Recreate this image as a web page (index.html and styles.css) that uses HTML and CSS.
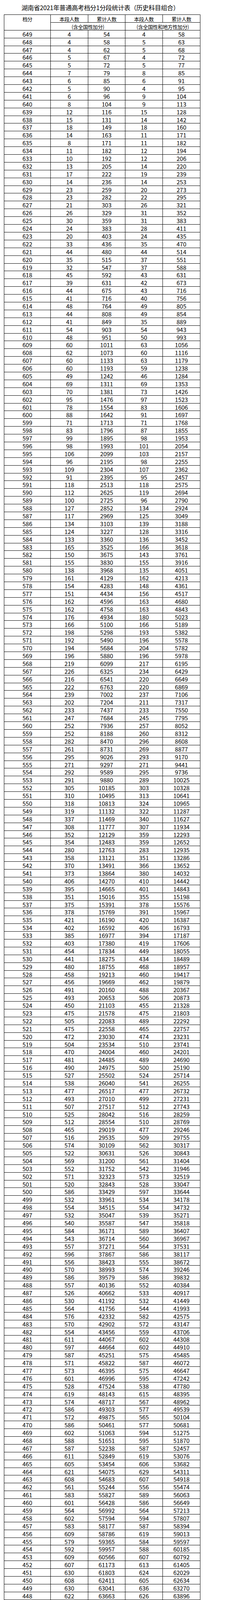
FILE: index.html
```html
<!DOCTYPE html>
<html lang="zh-CN">
<head>
<meta charset="utf-8">
<title>湖南省2021年普通高考档分1分段统计表（历史科目组合）</title>
<link rel="stylesheet" href="styles.css">
</head>
<body>
<div class="page">
<h1 class="title">湖南省2021年普通高考档分1分段统计表（历史科目组合）</h1>
<table class="score-table">
<thead>
<tr><th rowspan="2" class="th-score">档分</th><th>本段人数</th><th>累计人数</th><th>本段人数</th><th>累计人数</th></tr>
<tr><th colspan="2" class="th-span">(含全国性加分)</th><th colspan="2" class="th-span">(含全国性和地方性加分)</th></tr>
</thead>
<tbody>
<tr><td>649</td><td>4</td><td>54</td><td>4</td><td>58</td></tr>
<tr><td>648</td><td>4</td><td>58</td><td>5</td><td>63</td></tr>
<tr><td>647</td><td>4</td><td>62</td><td>5</td><td>68</td></tr>
<tr><td>646</td><td>5</td><td>67</td><td>4</td><td>72</td></tr>
<tr><td>645</td><td>5</td><td>72</td><td>5</td><td>77</td></tr>
<tr><td>644</td><td>7</td><td>79</td><td>8</td><td>85</td></tr>
<tr><td>643</td><td>6</td><td>85</td><td>6</td><td>91</td></tr>
<tr><td>642</td><td>5</td><td>90</td><td>4</td><td>95</td></tr>
<tr><td>641</td><td>6</td><td>96</td><td>9</td><td>104</td></tr>
<tr><td>640</td><td>8</td><td>104</td><td>9</td><td>113</td></tr>
<tr><td>639</td><td>12</td><td>116</td><td>15</td><td>128</td></tr>
<tr><td>638</td><td>15</td><td>131</td><td>14</td><td>142</td></tr>
<tr><td>637</td><td>18</td><td>149</td><td>18</td><td>160</td></tr>
<tr><td>636</td><td>14</td><td>163</td><td>11</td><td>171</td></tr>
<tr><td>635</td><td>8</td><td>171</td><td>11</td><td>182</td></tr>
<tr><td>634</td><td>11</td><td>182</td><td>12</td><td>194</td></tr>
<tr><td>633</td><td>10</td><td>192</td><td>12</td><td>206</td></tr>
<tr><td>632</td><td>13</td><td>205</td><td>14</td><td>220</td></tr>
<tr><td>631</td><td>17</td><td>222</td><td>19</td><td>239</td></tr>
<tr><td>630</td><td>14</td><td>236</td><td>14</td><td>253</td></tr>
<tr><td>629</td><td>23</td><td>259</td><td>20</td><td>273</td></tr>
<tr><td>628</td><td>23</td><td>282</td><td>22</td><td>295</td></tr>
<tr><td>627</td><td>21</td><td>303</td><td>26</td><td>321</td></tr>
<tr><td>626</td><td>26</td><td>329</td><td>31</td><td>352</td></tr>
<tr><td>625</td><td>30</td><td>359</td><td>31</td><td>383</td></tr>
<tr><td>624</td><td>24</td><td>383</td><td>28</td><td>411</td></tr>
<tr><td>623</td><td>20</td><td>403</td><td>24</td><td>435</td></tr>
<tr><td>622</td><td>33</td><td>436</td><td>35</td><td>470</td></tr>
<tr><td>621</td><td>44</td><td>480</td><td>44</td><td>514</td></tr>
<tr><td>620</td><td>35</td><td>515</td><td>37</td><td>551</td></tr>
<tr><td>619</td><td>32</td><td>547</td><td>37</td><td>588</td></tr>
<tr><td>618</td><td>45</td><td>592</td><td>43</td><td>631</td></tr>
<tr><td>617</td><td>39</td><td>631</td><td>42</td><td>673</td></tr>
<tr><td>616</td><td>44</td><td>675</td><td>43</td><td>716</td></tr>
<tr><td>615</td><td>41</td><td>716</td><td>40</td><td>756</td></tr>
<tr><td>614</td><td>48</td><td>764</td><td>49</td><td>805</td></tr>
<tr><td>613</td><td>44</td><td>808</td><td>49</td><td>854</td></tr>
<tr><td>612</td><td>41</td><td>849</td><td>35</td><td>889</td></tr>
<tr><td>611</td><td>54</td><td>903</td><td>54</td><td>943</td></tr>
<tr><td>610</td><td>48</td><td>951</td><td>50</td><td>993</td></tr>
<tr><td>609</td><td>60</td><td>1011</td><td>63</td><td>1056</td></tr>
<tr><td>608</td><td>62</td><td>1073</td><td>60</td><td>1116</td></tr>
<tr><td>607</td><td>60</td><td>1133</td><td>63</td><td>1179</td></tr>
<tr><td>606</td><td>60</td><td>1193</td><td>59</td><td>1238</td></tr>
<tr><td>605</td><td>49</td><td>1242</td><td>46</td><td>1284</td></tr>
<tr><td>604</td><td>69</td><td>1311</td><td>69</td><td>1353</td></tr>
<tr><td>603</td><td>70</td><td>1381</td><td>73</td><td>1426</td></tr>
<tr><td>602</td><td>95</td><td>1476</td><td>97</td><td>1523</td></tr>
<tr><td>601</td><td>78</td><td>1554</td><td>83</td><td>1606</td></tr>
<tr><td>600</td><td>88</td><td>1642</td><td>91</td><td>1697</td></tr>
<tr><td>599</td><td>71</td><td>1713</td><td>71</td><td>1768</td></tr>
<tr><td>598</td><td>83</td><td>1796</td><td>87</td><td>1855</td></tr>
<tr><td>597</td><td>99</td><td>1895</td><td>98</td><td>1953</td></tr>
<tr><td>596</td><td>98</td><td>1993</td><td>101</td><td>2054</td></tr>
<tr><td>595</td><td>106</td><td>2099</td><td>103</td><td>2157</td></tr>
<tr><td>594</td><td>96</td><td>2195</td><td>98</td><td>2255</td></tr>
<tr><td>593</td><td>109</td><td>2304</td><td>107</td><td>2362</td></tr>
<tr><td>592</td><td>91</td><td>2395</td><td>95</td><td>2457</td></tr>
<tr><td>591</td><td>118</td><td>2513</td><td>118</td><td>2575</td></tr>
<tr><td>590</td><td>112</td><td>2625</td><td>119</td><td>2694</td></tr>
<tr><td>589</td><td>100</td><td>2725</td><td>96</td><td>2790</td></tr>
<tr><td>588</td><td>127</td><td>2852</td><td>134</td><td>2924</td></tr>
<tr><td>587</td><td>117</td><td>2969</td><td>125</td><td>3049</td></tr>
<tr><td>586</td><td>134</td><td>3103</td><td>139</td><td>3188</td></tr>
<tr><td>585</td><td>124</td><td>3227</td><td>128</td><td>3316</td></tr>
<tr><td>584</td><td>133</td><td>3360</td><td>136</td><td>3452</td></tr>
<tr><td>583</td><td>165</td><td>3525</td><td>166</td><td>3618</td></tr>
<tr><td>582</td><td>150</td><td>3675</td><td>143</td><td>3761</td></tr>
<tr><td>581</td><td>155</td><td>3830</td><td>155</td><td>3916</td></tr>
<tr><td>580</td><td>138</td><td>3968</td><td>135</td><td>4051</td></tr>
<tr><td>579</td><td>161</td><td>4129</td><td>162</td><td>4213</td></tr>
<tr><td>578</td><td>154</td><td>4283</td><td>148</td><td>4361</td></tr>
<tr><td>577</td><td>151</td><td>4434</td><td>156</td><td>4517</td></tr>
<tr><td>576</td><td>162</td><td>4596</td><td>163</td><td>4680</td></tr>
<tr><td>575</td><td>162</td><td>4758</td><td>163</td><td>4843</td></tr>
<tr><td>574</td><td>176</td><td>4934</td><td>180</td><td>5023</td></tr>
<tr><td>573</td><td>166</td><td>5100</td><td>166</td><td>5189</td></tr>
<tr><td>572</td><td>198</td><td>5298</td><td>193</td><td>5382</td></tr>
<tr><td>571</td><td>192</td><td>5490</td><td>196</td><td>5578</td></tr>
<tr><td>570</td><td>194</td><td>5684</td><td>204</td><td>5782</td></tr>
<tr><td>569</td><td>196</td><td>5880</td><td>196</td><td>5978</td></tr>
<tr><td>568</td><td>219</td><td>6099</td><td>217</td><td>6195</td></tr>
<tr><td>567</td><td>226</td><td>6325</td><td>234</td><td>6429</td></tr>
<tr><td>566</td><td>216</td><td>6541</td><td>220</td><td>6649</td></tr>
<tr><td>565</td><td>222</td><td>6763</td><td>220</td><td>6869</td></tr>
<tr><td>564</td><td>239</td><td>7002</td><td>237</td><td>7106</td></tr>
<tr><td>563</td><td>202</td><td>7204</td><td>211</td><td>7317</td></tr>
<tr><td>562</td><td>233</td><td>7437</td><td>233</td><td>7550</td></tr>
<tr><td>561</td><td>247</td><td>7684</td><td>245</td><td>7795</td></tr>
<tr><td>560</td><td>252</td><td>7936</td><td>257</td><td>8052</td></tr>
<tr><td>559</td><td>252</td><td>8188</td><td>260</td><td>8312</td></tr>
<tr><td>558</td><td>282</td><td>8470</td><td>296</td><td>8608</td></tr>
<tr><td>557</td><td>261</td><td>8731</td><td>269</td><td>8877</td></tr>
<tr><td>556</td><td>295</td><td>9026</td><td>293</td><td>9170</td></tr>
<tr><td>555</td><td>271</td><td>9297</td><td>271</td><td>9441</td></tr>
<tr><td>554</td><td>292</td><td>9589</td><td>295</td><td>9736</td></tr>
<tr><td>553</td><td>291</td><td>9880</td><td>289</td><td>10025</td></tr>
<tr><td>552</td><td>305</td><td>10185</td><td>303</td><td>10328</td></tr>
<tr><td>551</td><td>310</td><td>10495</td><td>313</td><td>10641</td></tr>
<tr><td>550</td><td>318</td><td>10813</td><td>324</td><td>10965</td></tr>
<tr><td>549</td><td>319</td><td>11132</td><td>322</td><td>11287</td></tr>
<tr><td>548</td><td>337</td><td>11469</td><td>340</td><td>11627</td></tr>
<tr><td>547</td><td>308</td><td>11777</td><td>307</td><td>11934</td></tr>
<tr><td>546</td><td>352</td><td>12129</td><td>359</td><td>12293</td></tr>
<tr><td>545</td><td>354</td><td>12483</td><td>359</td><td>12652</td></tr>
<tr><td>544</td><td>280</td><td>12763</td><td>283</td><td>12935</td></tr>
<tr><td>543</td><td>358</td><td>13121</td><td>351</td><td>13286</td></tr>
<tr><td>542</td><td>370</td><td>13491</td><td>366</td><td>13652</td></tr>
<tr><td>541</td><td>373</td><td>13864</td><td>380</td><td>14032</td></tr>
<tr><td>540</td><td>406</td><td>14270</td><td>410</td><td>14442</td></tr>
<tr><td>539</td><td>395</td><td>14665</td><td>401</td><td>14843</td></tr>
<tr><td>538</td><td>351</td><td>15016</td><td>355</td><td>15198</td></tr>
<tr><td>537</td><td>375</td><td>15391</td><td>378</td><td>15576</td></tr>
<tr><td>536</td><td>378</td><td>15769</td><td>391</td><td>15967</td></tr>
<tr><td>535</td><td>421</td><td>16190</td><td>420</td><td>16387</td></tr>
<tr><td>534</td><td>402</td><td>16592</td><td>406</td><td>16793</td></tr>
<tr><td>533</td><td>385</td><td>16977</td><td>394</td><td>17187</td></tr>
<tr><td>532</td><td>403</td><td>17380</td><td>419</td><td>17606</td></tr>
<tr><td>531</td><td>454</td><td>17834</td><td>449</td><td>18055</td></tr>
<tr><td>530</td><td>441</td><td>18275</td><td>434</td><td>18489</td></tr>
<tr><td>529</td><td>480</td><td>18755</td><td>468</td><td>18957</td></tr>
<tr><td>528</td><td>458</td><td>19213</td><td>460</td><td>19417</td></tr>
<tr><td>527</td><td>456</td><td>19669</td><td>462</td><td>19879</td></tr>
<tr><td>526</td><td>491</td><td>20160</td><td>488</td><td>20367</td></tr>
<tr><td>525</td><td>493</td><td>20653</td><td>506</td><td>20873</td></tr>
<tr><td>524</td><td>450</td><td>21103</td><td>455</td><td>21328</td></tr>
<tr><td>523</td><td>475</td><td>21578</td><td>475</td><td>21803</td></tr>
<tr><td>522</td><td>505</td><td>22083</td><td>489</td><td>22292</td></tr>
<tr><td>521</td><td>475</td><td>22558</td><td>465</td><td>22757</td></tr>
<tr><td>520</td><td>472</td><td>23030</td><td>474</td><td>23231</td></tr>
<tr><td>519</td><td>504</td><td>23534</td><td>510</td><td>23741</td></tr>
<tr><td>518</td><td>470</td><td>24004</td><td>460</td><td>24201</td></tr>
<tr><td>517</td><td>481</td><td>24485</td><td>489</td><td>24690</td></tr>
<tr><td>516</td><td>490</td><td>24975</td><td>500</td><td>25190</td></tr>
<tr><td>515</td><td>527</td><td>25502</td><td>524</td><td>25714</td></tr>
<tr><td>514</td><td>538</td><td>26040</td><td>541</td><td>26255</td></tr>
<tr><td>513</td><td>477</td><td>26517</td><td>477</td><td>26732</td></tr>
<tr><td>512</td><td>493</td><td>27010</td><td>499</td><td>27231</td></tr>
<tr><td>511</td><td>507</td><td>27517</td><td>512</td><td>27743</td></tr>
<tr><td>510</td><td>525</td><td>28042</td><td>516</td><td>28259</td></tr>
<tr><td>509</td><td>512</td><td>28554</td><td>510</td><td>28769</td></tr>
<tr><td>508</td><td>465</td><td>29019</td><td>477</td><td>29246</td></tr>
<tr><td>507</td><td>516</td><td>29535</td><td>509</td><td>29755</td></tr>
<tr><td>506</td><td>574</td><td>30109</td><td>562</td><td>30317</td></tr>
<tr><td>505</td><td>522</td><td>30631</td><td>526</td><td>30843</td></tr>
<tr><td>504</td><td>569</td><td>31200</td><td>561</td><td>31404</td></tr>
<tr><td>503</td><td>552</td><td>31752</td><td>542</td><td>31946</td></tr>
<tr><td>502</td><td>571</td><td>32323</td><td>573</td><td>32519</td></tr>
<tr><td>501</td><td>520</td><td>32843</td><td>528</td><td>33047</td></tr>
<tr><td>500</td><td>586</td><td>33429</td><td>597</td><td>33644</td></tr>
<tr><td>499</td><td>532</td><td>33961</td><td>534</td><td>34178</td></tr>
<tr><td>498</td><td>554</td><td>34515</td><td>554</td><td>34732</td></tr>
<tr><td>497</td><td>532</td><td>35047</td><td>539</td><td>35271</td></tr>
<tr><td>496</td><td>540</td><td>35587</td><td>547</td><td>35818</td></tr>
<tr><td>495</td><td>584</td><td>36171</td><td>589</td><td>36407</td></tr>
<tr><td>494</td><td>543</td><td>36714</td><td>560</td><td>36967</td></tr>
<tr><td>493</td><td>557</td><td>37271</td><td>564</td><td>37531</td></tr>
<tr><td>492</td><td>596</td><td>37867</td><td>586</td><td>38117</td></tr>
<tr><td>491</td><td>556</td><td>38423</td><td>555</td><td>38672</td></tr>
<tr><td>490</td><td>570</td><td>38993</td><td>574</td><td>39246</td></tr>
<tr><td>489</td><td>586</td><td>39579</td><td>586</td><td>39832</td></tr>
<tr><td>488</td><td>557</td><td>40136</td><td>552</td><td>40384</td></tr>
<tr><td>487</td><td>526</td><td>40662</td><td>533</td><td>40917</td></tr>
<tr><td>486</td><td>530</td><td>41192</td><td>532</td><td>41449</td></tr>
<tr><td>485</td><td>564</td><td>41756</td><td>544</td><td>41993</td></tr>
<tr><td>484</td><td>576</td><td>42332</td><td>582</td><td>42575</td></tr>
<tr><td>483</td><td>570</td><td>42902</td><td>572</td><td>43147</td></tr>
<tr><td>482</td><td>554</td><td>43456</td><td>559</td><td>43706</td></tr>
<tr><td>481</td><td>611</td><td>44067</td><td>602</td><td>44308</td></tr>
<tr><td>480</td><td>597</td><td>44664</td><td>602</td><td>44910</td></tr>
<tr><td>479</td><td>587</td><td>45251</td><td>575</td><td>45485</td></tr>
<tr><td>478</td><td>571</td><td>45822</td><td>587</td><td>46072</td></tr>
<tr><td>477</td><td>573</td><td>46395</td><td>575</td><td>46647</td></tr>
<tr><td>476</td><td>601</td><td>46996</td><td>595</td><td>47242</td></tr>
<tr><td>475</td><td>528</td><td>47524</td><td>538</td><td>47780</td></tr>
<tr><td>474</td><td>619</td><td>48143</td><td>615</td><td>48395</td></tr>
<tr><td>473</td><td>574</td><td>48717</td><td>567</td><td>48962</td></tr>
<tr><td>472</td><td>586</td><td>49303</td><td>577</td><td>49539</td></tr>
<tr><td>471</td><td>572</td><td>49875</td><td>565</td><td>50104</td></tr>
<tr><td>470</td><td>586</td><td>50461</td><td>577</td><td>50681</td></tr>
<tr><td>469</td><td>602</td><td>51063</td><td>594</td><td>51275</td></tr>
<tr><td>468</td><td>588</td><td>51651</td><td>595</td><td>51870</td></tr>
<tr><td>467</td><td>587</td><td>52238</td><td>587</td><td>52457</td></tr>
<tr><td>466</td><td>611</td><td>52849</td><td>619</td><td>53076</td></tr>
<tr><td>465</td><td>605</td><td>53454</td><td>606</td><td>53682</td></tr>
<tr><td>464</td><td>621</td><td>54075</td><td>629</td><td>54311</td></tr>
<tr><td>463</td><td>608</td><td>54683</td><td>607</td><td>54918</td></tr>
<tr><td>462</td><td>561</td><td>55244</td><td>556</td><td>55474</td></tr>
<tr><td>461</td><td>583</td><td>55827</td><td>589</td><td>56063</td></tr>
<tr><td>460</td><td>601</td><td>56428</td><td>586</td><td>56649</td></tr>
<tr><td>459</td><td>564</td><td>56992</td><td>564</td><td>57213</td></tr>
<tr><td>458</td><td>602</td><td>57594</td><td>594</td><td>57807</td></tr>
<tr><td>457</td><td>583</td><td>58177</td><td>587</td><td>58394</td></tr>
<tr><td>456</td><td>609</td><td>58786</td><td>619</td><td>59013</td></tr>
<tr><td>455</td><td>579</td><td>59365</td><td>584</td><td>59597</td></tr>
<tr><td>454</td><td>592</td><td>59957</td><td>588</td><td>60185</td></tr>
<tr><td>453</td><td>609</td><td>60566</td><td>607</td><td>60792</td></tr>
<tr><td>452</td><td>607</td><td>61173</td><td>613</td><td>61405</td></tr>
<tr><td>451</td><td>630</td><td>61803</td><td>624</td><td>62029</td></tr>
<tr><td>450</td><td>608</td><td>62411</td><td>605</td><td>62634</td></tr>
<tr><td>449</td><td>630</td><td>63041</td><td>636</td><td>63270</td></tr>
<tr><td>448</td><td>622</td><td>63663</td><td>626</td><td>63896</td></tr>
</tbody>
</table>
</div>
</body>
</html>
```

FILE: styles.css
```css
/* The browser window is 4096px tall (not 4529), so the vertical
   measurements are the reference's scaled by 4096/4529 to keep
   the whole table in view. */
html, body {
  margin: 0;
  padding: 0;
  background: #ffffff;
}

body {
  font-family: "Noto Sans CJK SC", sans-serif;
  color: #000000;
}

.page {
  padding-left: 10px;
  width: 503px;
}

.title {
  margin: 0;
  height: 37px;
  padding-right: 9px;
  display: flex;
  align-items: center;
  justify-content: center;
  font-size: 16px;
  font-weight: normal;
  letter-spacing: -0.3px;
  line-height: 20px;
  white-space: nowrap;
}

/* Table laid out as a grid so every row has the same fixed pitch */
.score-table {
  display: grid;
  grid-template-columns: 119px 96px 95px 96px 96px;
  grid-auto-rows: 19.9px;
  border-top: 1px solid #000000;
  border-left: 1px solid #000000;
  width: max-content;
}

.score-table thead,
.score-table tbody,
.score-table tr {
  display: contents;
}

.score-table th,
.score-table td {
  display: block;
  box-sizing: border-box;
  border-right: 1px solid #000000;
  border-bottom: 1px solid #000000;
  padding: 0;
  text-align: center;
  font-weight: normal;
  font-size: 15px;
  line-height: 19px;
  white-space: nowrap;
  overflow: hidden;
}

.score-table th {
  font-size: 13px;
  letter-spacing: -0.4px;
  padding-top: 1px;
}

.th-score {
  grid-row: span 2;
  display: flex;
  align-items: center;
  justify-content: center;
  padding-top: 3px;
}

.th-span {
  grid-column: span 2;
}
```
